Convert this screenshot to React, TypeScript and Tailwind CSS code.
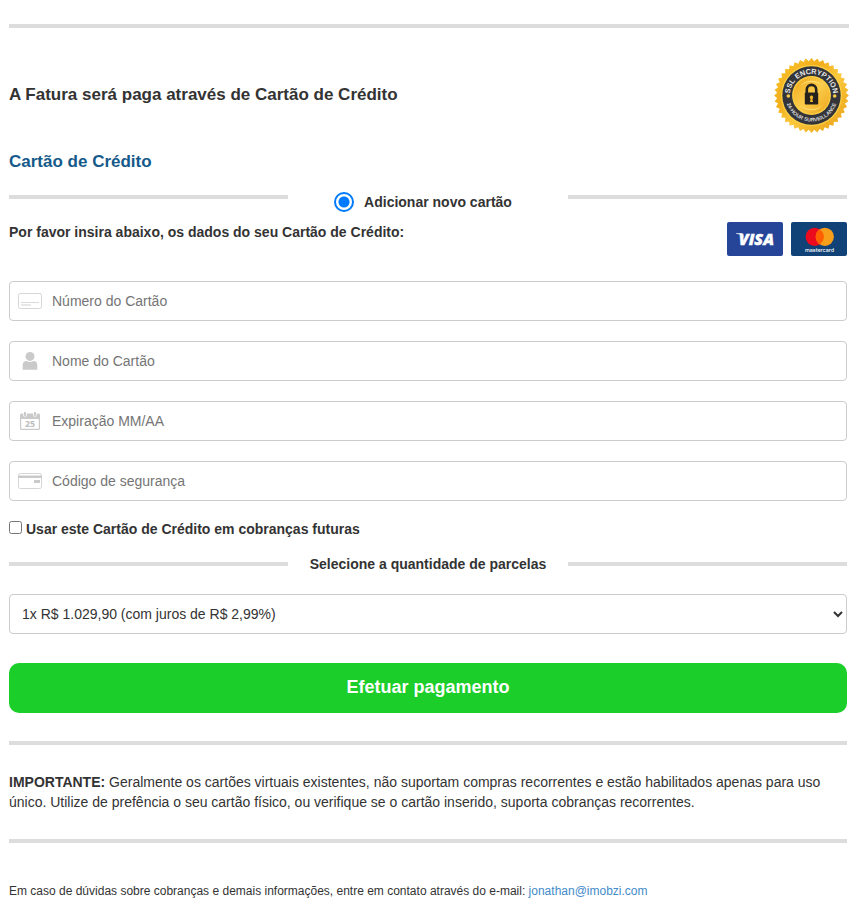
import type { ReactNode } from "react";

const TEETH = 40;

const sealPoints = Array.from({ length: TEETH * 2 }, (_, i) => {
  const radius = i % 2 === 0 ? 37.4 : 34.4;
  const angle = (i * Math.PI) / TEETH;
  return `${(37.5 + radius * Math.cos(angle)).toFixed(2)},${(37.5 + radius * Math.sin(angle)).toFixed(2)}`;
}).join(" ");

function SslSeal() {
  return (
    <svg
      viewBox="0 0 75 75"
      className="h-[75px] w-[75px] shrink-0"
      role="img"
      aria-label="SSL Encryption"
    >
      <defs>
        <linearGradient id="gold" x1="0" y1="0" x2="1" y2="1">
          <stop offset="0" stopColor="#f9c72f" />
          <stop offset="0.35" stopColor="#f3ae1c" />
          <stop offset="0.55" stopColor="#fbc93c" />
          <stop offset="1" stopColor="#e79b12" />
        </linearGradient>
        <linearGradient id="coin" x1="0" y1="0" x2="1" y2="1">
          <stop offset="0" stopColor="#f1a71a" />
          <stop offset="0.5" stopColor="#fbcc4a" />
          <stop offset="1" stopColor="#eda51a" />
        </linearGradient>
        <path id="arcTop" d="M15.9 37.5a21.6 21.6 0 0 1 43.2 0" />
        <path id="arcBottom" d="M11.5 37.5a26 26 0 0 0 52 0" />
      </defs>
      <polygon points={sealPoints} fill="url(#gold)" />
      <circle cx="37.5" cy="37.5" r="30.5" fill="#fbd046" />
      <circle cx="37.5" cy="37.5" r="29.2" fill="#34353a" />
      <circle cx="37.5" cy="37.5" r="19.4" fill="#fbd046" />
      <circle cx="37.5" cy="37.5" r="18.2" fill="url(#coin)" />
      <path
        d="M26 28a15 15 0 0 1 23 0a19 19 0 0 0-23 0zM26 47a15 15 0 0 0 23 0a19 19 0 0 1-23 0z"
        fill="#fbdc72"
      />
      <circle cx="14.3" cy="38" r="1.8" fill="#f8cf4c" />
      <circle cx="60.7" cy="38" r="1.8" fill="#f8cf4c" />
      <text
        fill="#e8e8e8"
        fontSize="7.3"
        fontWeight="700"
        textAnchor="middle"
        fontFamily="'Liberation Sans', sans-serif"
      >
        <textPath href="#arcTop" startOffset="50%">
          SSL ENCRYPTION
        </textPath>
      </text>
      <text
        fill="#d8d8d8"
        fontSize="5.2"
        fontWeight="700"
        textAnchor="middle"
        fontFamily="'Liberation Sans', sans-serif"
      >
        <textPath href="#arcBottom" startOffset="50%">
          24-HOUR SURVEILLANCE
        </textPath>
      </text>
      <path
        d="M32.8 36v-4.400a4.700 4.700 0 0 1 9.400 0V36"
        fill="none"
        stroke="#25221d"
        strokeWidth="2.6"
      />
      <rect x="30.8" y="34.6" width="13.400" height="11.800" rx="1" fill="#25221d" />
      <path d="M37.5 37.600a1.800 1.800 0 0 1 .9 3.300l.6 3.100h-3l.6-3.100a1.800 1.800 0 0 1 .9-3.300z" fill="#f1b52c" />
    </svg>
  );
}

function VisaLogo() {
  return (
    <svg viewBox="0 0 56 34" className="h-[34px] w-14" role="img" aria-label="Visa">
      <rect width="56" height="34" rx="2" fill="#264599" />
      <path d="M9 11.3h6.300l1.700 4.200c-1.600-1.900-3.800-3.200-8-3.700z" fill="#fff" />
      <text
        x="29.4"
        y="22.8"
        fill="#fff"
        stroke="#fff"
        strokeWidth="0.4"
        fontSize="16"
        fontWeight="800"
        fontStyle="italic"
        textAnchor="middle"
        fontFamily="'Open Sans', sans-serif"
      >
        VISA
      </text>
    </svg>
  );
}

function MastercardLogo() {
  return (
    <svg viewBox="0 0 56 34" className="h-[34px] w-14" role="img" aria-label="Mastercard">
      <rect width="56" height="34" rx="2" fill="#104177" />
      <circle cx="23.7" cy="14.8" r="9.1" fill="#eb0a1e" />
      <circle cx="33.8" cy="14.8" r="9.1" fill="#f79e1b" />
      <path d="M28.75 7.2a9.1 9.1 0 0 1 0 15.2a9.1 9.1 0 0 1 0-15.2z" fill="#ff5f00" />
      <text
        x="28.5"
        y="29.8"
        fill="#fff"
        fontSize="5.4"
        fontWeight="500"
        textAnchor="middle"
        fontFamily="Inter, sans-serif"
      >
        mastercard
      </text>
    </svg>
  );
}

function CardIcon() {
  return (
    <svg viewBox="0 0 24 24" className="h-6 w-6" aria-hidden="true">
      <rect x="0.5" y="4.5" width="23" height="15" rx="1.8" fill="none" stroke="#d6d6d6" />
      <path d="M3 13h18v1H3z" fill="#dadada" />
      <path d="M3 15h10v2H3z" fill="#e8e8e8" />
    </svg>
  );
}

function UserIcon() {
  return (
    <svg viewBox="0 0 24 24" className="h-6 w-6" fill="#cacaca" aria-hidden="true">
      <circle cx="12" cy="7.4" r="4.5" />
      <path d="M4.7 20.8v-4.6c0-3 1.4-4.3 4-4.3 1 .7 2.1 1 3.3 1s2.3-.3 3.3-1c2.6 0 4 1.3 4 4.3v4.6z" />
    </svg>
  );
}

function CalendarIcon() {
  return (
    <svg viewBox="0 0 24 24" className="h-6 w-6" aria-hidden="true">
      <path
        fillRule="evenodd"
        d="M3.5 4.5h17A1.5 1.5 0 0 1 22 6v13.5a1.5 1.5 0 0 1-1.5 1.5h-17A1.5 1.5 0 0 1 2 19.5V6a1.5 1.5 0 0 1 1.5-1.5zM3.2 10v9.7h17.6V10z"
        fill="#cacaca"
      />
      <path d="M7 3.500v2.400M17 3.500v2.400" stroke="#fff" strokeWidth="3.600" strokeLinecap="round" />
      <path d="M7 3.800v2.400M17 3.800v2.400" stroke="#cacaca" strokeWidth="2" strokeLinecap="round" />
      <text
        x="12"
        y="18.2"
        fill="#bdbdbd"
        fontSize="8.8"
        fontWeight="700"
        textAnchor="middle"
        fontFamily="'Noto Sans', sans-serif"
      >
        25
      </text>
    </svg>
  );
}

function CvcIcon() {
  return (
    <svg viewBox="0 0 24 24" className="h-6 w-6" aria-hidden="true">
      <rect x="0.5" y="4.5" width="23" height="15" rx="1.8" fill="none" stroke="#d6d6d6" />
      <path d="M0 6.500h24v2.500H0z" fill="#cacaca" />
      <path d="M16 11h6v3h-6z" fill="#cacaca" />
    </svg>
  );
}

function Field({ id, label, icon }: { id: string; label: string; icon: ReactNode }) {
  return (
    <div className="flex h-10 items-center rounded border border-[#ccc] bg-white pl-2">
      <label htmlFor={id} aria-label={label} className="shrink-0">
        {icon}
      </label>
      <input
        id={id}
        type="text"
        placeholder={label}
        className="h-full min-w-0 flex-1 bg-transparent px-[10px] text-sm outline-none placeholder:text-[#757575]"
      />
    </div>
  );
}

function Rule() {
  return <hr className="border-t-4 border-[#ddd]" />;
}

export default function App() {
  return (
    <main className="bg-white pb-5 pl-[9px] pr-3 pt-6 font-['Liberation_Sans',Arial,sans-serif] text-sm leading-5 text-[#333]">
      <div className="-mr-0.5">
        <Rule />
        <header className="mt-[30px] flex items-center justify-between">
          <h1 className="pb-0.5 text-[17px] font-bold">
            A Fatura será paga através de Cartão de Crédito
          </h1>
          <SslSeal />
        </header>
      </div>

      <h2 className="mt-[19px] text-[17px] font-bold text-[#155a8a]">Cartão de Crédito</h2>

      <form>
        <div className="mt-5 grid grid-cols-3">
          <div className="pt-[3px]">
            <Rule />
          </div>
          <label className="flex items-center justify-center gap-[10px] pr-[10px] font-bold">
            <input
              type="radio"
              name="card"
              defaultChecked
              className="h-5 w-5 appearance-none rounded-full border-2 border-[#007bff] bg-white bg-[radial-gradient(circle,#007bff_5px,transparent_6px)]"
            />
            Adicionar novo cartão
          </label>
          <div className="pt-[3px]">
            <Rule />
          </div>
        </div>

        <div className="mt-[10px] flex items-start justify-between">
          <p className="font-bold">Por favor insira abaixo, os dados do seu Cartão de Crédito:</p>
          <div className="flex gap-2">
            <VisaLogo />
            <MastercardLogo />
          </div>
        </div>

        <div className="mt-[25px] flex flex-col gap-5">
          <Field id="number" label="Número do Cartão" icon={<CardIcon />} />
          <Field id="name" label="Nome do Cartão" icon={<UserIcon />} />
          <Field id="expiry" label="Expiração MM/AA" icon={<CalendarIcon />} />
          <Field id="cvc" label="Código de segurança" icon={<CvcIcon />} />
        </div>

        <label className="mt-[18px] flex items-start gap-1 font-bold">
          <input type="checkbox" className="mt-0.5 h-[13px] w-[13px]" />
          Usar este Cartão de Crédito em cobranças futuras
        </label>

        <div className="mt-[15px] grid grid-cols-3 items-center">
          <Rule />
          <label htmlFor="installments" className="text-center font-bold">
            Selecione a quantidade de parcelas
          </label>
          <Rule />
        </div>

        <select
          id="installments"
          className="mt-5 block h-10 w-full rounded border border-[#ccc] bg-white pl-2 text-sm text-[#333]"
        >
          <option>1x R$ 1.029,90 (com juros de R$ 2,99%)</option>
        </select>

        <button
          type="button"
          className="mt-[29px] block h-[50px] w-full rounded-[10px] bg-[#1bce2a] pb-0.5 text-lg font-bold text-white"
        >
          Efetuar pagamento
        </button>
      </form>

      <div className="mt-7">
        <Rule />
        <p className="py-[27px]">
          <strong>IMPORTANTE:</strong> Geralmente os cartões virtuais existentes, não suportam
          compras recorrentes e estão habilitados apenas para uso único. Utilize de prefência o seu
          cartão físico, ou verifique se o cartão inserido, suporta cobranças recorrentes.
        </p>
        <Rule />
      </div>

      <footer className="mt-[38px] text-xs leading-5">
        Em caso de dúvidas sobre cobranças e demais informações, entre em contato através do
        e-mail:{" "}
        <a href="mailto:jonathan@imobzi.com" className="text-[#428bca]">
          jonathan@imobzi.com
        </a>
      </footer>
    </main>
  );
}
